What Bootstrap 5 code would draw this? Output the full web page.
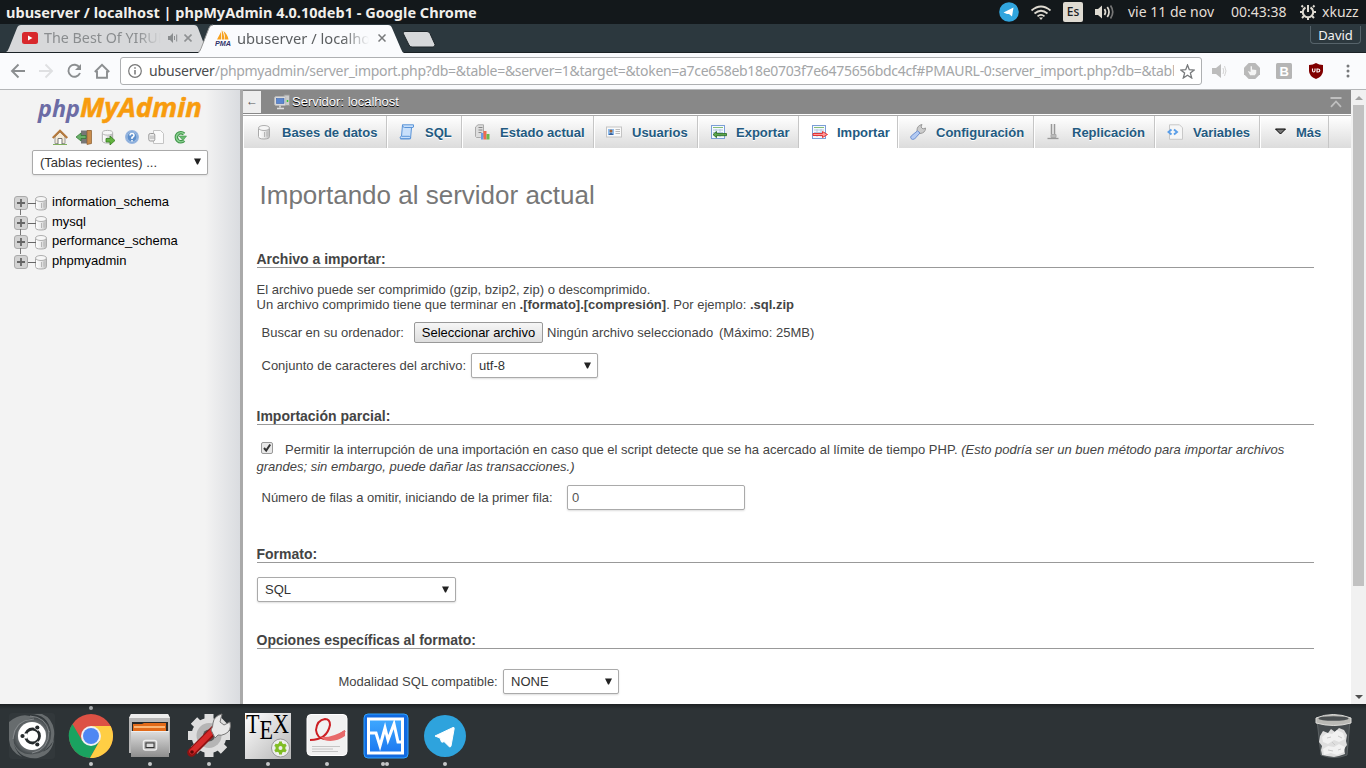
<!DOCTYPE html>
<html lang="es">
<head>
<meta charset="utf-8">
<meta name="viewport" content="width=device-width, initial-scale=1">
<title>ubuserver / localhost | phpMyAdmin 4.0.10deb1</title>
<link rel="stylesheet" href="https://cdn.jsdelivr.net/npm/bootstrap@5.3.0/dist/css/bootstrap.min.css">
<style>
body{width:1366px;height:768px;overflow:hidden;font-family:"Liberation Sans",Arial,sans-serif;font-size:13px;line-height:15px;color:#444;background:#fff}
svg{display:block;flex:none}
.ubu{font-family:"Noto Sans","Open Sans",sans-serif;white-space:nowrap}
.panel{height:24px;background:#13181b;color:#e3dfd7;font-size:14px;line-height:24px}
.panel .wintitle{font-weight:700;width:900px;padding-left:6px;font-size:14.5px;letter-spacing:.02px;color:#f1efeb}
.dt{margin-left:13px;width:103px}
.tm{width:69px}
.xk{margin-left:6px}
.es{width:20px;height:20px;background:#dfdbd2;color:#1c2022;border-radius:2px;font-size:12px;line-height:20px;text-align:center;font-weight:500}
.strip{height:29px;background:#2c383e;border-bottom:1px solid #1b2226}
.btab{height:29px;font-size:14.3px;line-height:28px}
.btab>svg.shape{position:absolute;left:0;top:0}
.btab .inner{position:relative;height:28px}
.fadeout{overflow:hidden;-webkit-mask-image:linear-gradient(90deg,#000 80%,transparent);mask-image:linear-gradient(90deg,#000 80%,transparent)}
.t1{margin-left:6px;width:117px;margin-right:7px}
.t2{margin-left:6px;width:132px;font-size:14.7px}
.user{width:51px;height:18px;border:1px solid #56636a;border-top:0;border-radius:0 0 4px 4px;color:#f3f3f3;font-size:13px;line-height:18px;text-align:center;margin:2px 5px 0 0}
.tools{height:37px;background:#fafbfd;border-bottom:1px solid #b4b6b8}
.omni{width:1082px;height:28px;border:1px solid #aeb0b2;border-radius:3px;background:#fff;color:#a4a6a8;font-size:14px;line-height:26px}
.omni b{font-weight:400;color:#4a4c4e;letter-spacing:-.15px}
.url{width:1025px;overflow:hidden;margin-left:7px;letter-spacing:-.31px}
.page{height:614px}
.side{width:240px;background:linear-gradient(90deg,#f3f3f3 0,#f3f3f3 205px,#dadce0 240px)}
.divider{width:3px;background:#aaa}
.fld{height:25px;border:1px solid #aaa;border-radius:2px;background:#fff;box-shadow:0 1px 2px #ddd;line-height:24px;padding-left:7px;color:#333;display:flex;justify-content:space-between;align-items:flex-start}
.fld svg{margin:8px 6px 0 0}
.tree li{height:20px;line-height:20px;color:#000}
.tree li:nth-child(2){height:19px}
.tree li:not(:last-child) .knob::after{content:"";position:absolute;left:6px;top:14px;width:1px;height:6px;background:#777}
.knob{position:relative;width:27px;margin-top:3px}
.srv{height:24px;background:#888;color:#fff;text-shadow:0 1px 0 #000;line-height:23px}
.srv .tog{width:18px;height:22px;margin-top:1px;background:#eee;color:#555;text-shadow:none;text-align:center;line-height:21px;font-size:12px}
.menu{height:33px;border-top:1px solid #aaa;background:linear-gradient(#fff,#dcdcdc);box-shadow:0 -1px 0 #fff}
.menu a{height:32px;padding-left:11px;border-left:1px solid #fff;border-right:1px solid #c6c6c6;font-weight:700;color:#235a81;text-decoration:none;text-shadow:0 1px 0 #fff;white-space:nowrap;display:flex;align-items:center;gap:10px;flex:none}
.menu a.on{background:#fff}
.menu a:nth-child(1){width:144px;padding-left:12px}.menu a:nth-child(2){width:75px}.menu a:nth-child(3){width:132px}.menu a:nth-child(4){width:104px}.menu a:nth-child(5){width:101px}.menu a:nth-child(6){width:99px}.menu a:nth-child(7){width:136px}.menu a:nth-child(8){width:121px}.menu a:nth-child(9){width:105px}.menu a:nth-child(10){width:69px}
.cont{padding:0 37px 0 13.500px;white-space:nowrap}
.cont h2{font-size:26px;line-height:40px;height:40px;margin:27px 0 0 3px;color:#777;font-weight:400}
.cont h3{font-size:14px;font-weight:700;line-height:19px;height:18px;border-bottom:1px solid #999;margin:0;color:#444}
.filebtn{height:21px;width:129px;border:1px solid #999;border-radius:2px;background:linear-gradient(#f6f6f6,#dedede);color:#000;text-align:center;line-height:19px}
.scroll{width:15px;background:#f1f1f1}
.scroll i{display:block;width:11px;height:481px;background:#c1c1c1}
.dock{height:64px;background:linear-gradient(#1d2123,#2d3336 5px)}
.dock .app{width:59px;height:64px;padding-top:8px;position:relative}
.dock .app svg{margin:0 auto}
.dot1::after,.dot2::after{content:"";position:absolute;bottom:2px;left:27.500px;width:4px;height:4px;border-radius:2px;background:#c4c7c8}
.dot2::after{left:25px;box-shadow:4px 0 0 #c4c7c8}
.top1::before{content:"";position:absolute;top:2px;left:27.500px;width:4px;height:4px;border-radius:2px;background:#a4a8aa}
</style>
<script src="https://cdn.jsdelivr.net/npm/bootstrap@5.3.0/dist/js/bootstrap.bundle.min.js"></script>
</head>
<body class="d-flex flex-column">
<svg width="0" height="0" class="position-absolute">
<defs>
<linearGradient id="cyl"><stop offset="0" stop-color="#fff"/><stop offset=".5" stop-color="#ececec"/><stop offset="1" stop-color="#bbb"/></linearGradient>
<linearGradient id="metal" x2="0" y2="1"><stop offset="0" stop-color="#dedede"/><stop offset="1" stop-color="#8e8e8e"/></linearGradient>
<linearGradient id="blu" x2="0" y2="1"><stop offset="0" stop-color="#3fa9ff"/><stop offset="1" stop-color="#1c78f0"/></linearGradient>
<linearGradient id="paper" x2="1" y2="1"><stop offset="0" stop-color="#fff"/><stop offset="1" stop-color="#b5b5b5"/></linearGradient>
<radialGradient id="dash"><stop offset=".5" stop-color="#85898b"/><stop offset="1" stop-color="#3a4043"/></radialGradient>
<symbol id="db" viewBox="0 0 16 16"><path d="M2.500 4.500v8q0 2.500 5.500 2.500t5.500-2.500v-8" fill="url(#cyl)" stroke="#aaa"/><ellipse cx="8" cy="4" rx="5.500" ry="2.500" fill="#f6f6f6" stroke="#b0b0b0"/><path d="M8.500 8v5M11 7.500v5" stroke="#b5b5b5"/></symbol>
<symbol id="plus" viewBox="0 0 27 14"><path d="M14 7.500h8" stroke="#666"/><rect x=".5" y=".5" width="13" height="13" rx="2.500" fill="#d2d2d2" stroke="#aaa"/><path d="M7 3v8M3 7h8" stroke="#666" stroke-width="1.800"/></symbol>
<symbol id="sheet" viewBox="0 0 16 16"><rect x="1.500" y="1.500" width="13" height="13" fill="#f5f9ff" stroke="#7b9fd6"/><path d="M3 3.500h10" stroke="#86bd76"/><path d="M3 6h10M3 8.500h10M3 11h10M6 5v8M10 5v8" stroke="#b4c8e0"/></symbol>
<symbol id="down" viewBox="0 0 7 7"><path d="M0 .5h7L4 6.500H3z" fill="#222"/></symbol>
</defs>
</svg>

<header class="panel ubu d-flex">
  <div class="wintitle">ubuserver / localhost | phpMyAdmin 4.0.10deb1 - Google Chrome</div>
  <div class="d-flex align-items-center ms-auto" style="width:367px">
    <svg width="20" height="20" viewBox="0 0 20 20"><circle cx="10" cy="10" r="9.800" fill="#31a5de"/><path d="M4.500 10.500 14.500 5.500 13 14.500 10 12 8 12z" fill="#fff"/></svg>
    <svg class="ms-2" width="28" height="20" viewBox="-2 0 28 20" fill="none" stroke="#dfdbd2" stroke-width="1.700"><path d="M2.500 8.500q9.500-8 19 0M5.500 11.500q6.500-5.500 13 0M8.500 14.300q3.500-3 7 0"/><path d="M10 15.500h4L12 18z" fill="#dfdbd2" stroke="none"/></svg>
    <div class="es" style="margin-left:8px">Es</div>
    <svg style="margin-left:12px" width="20" height="18" viewBox="0 0 20 18" fill="none" stroke="#dfdbd2" stroke-width="1.700"><path d="M0 6h3l4-3.500v13L3 12H0z" fill="#dfdbd2" stroke="none"/><path d="M9.500 6q2 3 0 6M12.300 4q3.500 5 0 10"/><path d="M15.500 2.500q4.500 6.500 0 13" stroke="#777"/></svg>
    <span class="dt">vie 11 de nov</span><span class="tm">00:43:38</span>
    <svg width="16" height="18" viewBox="0 0 16 18" fill="none" stroke="#dfdbd2" stroke-width="2"><path d="M5.500 4.500a5.200 5.200 0 1 0 5 0M8 2v7"/><path d="M3 4 1.500 2.500M13 4l1.500-1.500M2.500 9H0M13.500 9H16M4 13l-2 2M12 13l2 2M8 14v3"/></svg>
    <span class="xk">xkuzz</span>
  </div>
</header>

<nav class="strip d-flex">
  <div class="btab ubu position-relative" style="width:198px;color:#8a8d8f">
    <svg class="shape" width="210" height="28"><path d="M6 28q2-1 3-4L17 4q1-3 4-3H194q3 0 4 3l9 24z" fill="#d7d8da"/></svg>
    <div class="inner d-flex align-items-center">
      <svg style="margin-left:22px" width="16" height="12"><rect width="16" height="12" rx="2.500" fill="#d8282c"/><path d="M6 3.500v5l4.500-2.500z" fill="#fff"/></svg>
      <div class="fadeout t1">The Best Of YIRUMA</div>
      <svg width="10" height="10" viewBox="0 0 10 10" fill="none" stroke="#8a8d8f"><path d="M0 3h2l3-3v10L2 7H0z" fill="#8a8d8f" stroke="none"/><path d="M6.500 3v4M8.700 1.500v7"/></svg>
      <svg style="margin-left:6px" width="8" height="8" stroke="#8f9193" stroke-width="1.600"><path d="M.5.500l7 7M7.500.500l-7 7"/></svg>
    </div>
  </div>
  <div class="btab ubu position-relative" style="width:205px;color:#5b5e60">
    <svg class="shape" width="210" height="29"><path d="M0 29q2-1 3-4L11 4q1-3 4-3H190q3 0 4 3l9 21q1 3 3 4z" fill="#fafbfd"/><path d="M0 28.500q2-1 3-4L11 4q1-3 4-3" fill="none" stroke="#999"/></svg>
    <div class="inner d-flex align-items-center">
      <svg style="margin-left:17px" width="16" height="16" viewBox="0 0 16 16"><path d="M2 9.500 6 2v7.500zM6.800 9.500V0q2 3 2.700 9.500zM10 9.500Q10 4 8.500 1q4 3 5 8.500z" fill="#f7a11e"/><text x="0" y="15.500" font-family="Liberation Sans" font-size="6.500" font-weight="700" font-style="italic" fill="#33336b" textLength="16" lengthAdjust="spacingAndGlyphs">PMA</text></svg>
      <div class="fadeout t2">ubuserver / localhost</div>
      <svg style="margin-left:9px" width="8" height="8" stroke="#77797b" stroke-width="1.500"><path d="M.5.500l7 7M7.500.500l-7 7"/></svg>
    </div>
  </div>
  <svg width="34" height="20" style="margin-top:5px"><path d="M2 2.500h22q2 0 3 2l5 11q0 2.500-2 2.500H9q-2 0-3-2L0 4q0-1.500 2-1.500z" fill="#d6d8da" stroke="#1d2529"/></svg>
  <div class="user ubu ms-auto">David</div>
</nav>

<div class="tools d-flex align-items-center">
  <svg style="margin-left:10px" width="105" height="20" viewBox="0 0 105 20" fill="none" stroke="#8b8e90" stroke-width="1.900"><path d="M15 10H2.500M8.500 3.500 2 10l6.500 6.500"/><path d="M29 10h12.500M35.500 3.500 42 10l-6.500 6.500" stroke="#dfe0e2"/><path d="M69.500 6.500A6 6 0 1 0 70 12"/><path d="M71 3v6h-6z" fill="#8b8e90" stroke="none"/><path d="M84.800 11 92 3.800l7.200 7.200M87 10v6.800h10V10"/></svg>
  <div class="omni d-flex align-items-center" style="margin-left:5px">
    <svg style="margin-left:7px" width="14" height="14" viewBox="0 0 14 14" fill="none" stroke="#777"><circle cx="7" cy="7" r="6.300" stroke-width="1.200"/><path d="M7 6v4.500M7 3.300v1.500" stroke-width="1.500"/></svg>
    <div class="url ubu"><b>ubuserver</b>/phpmyadmin/server_import.php?db=&amp;table=&amp;server=1&amp;target=&amp;token=a7ce658eb18e0703f7e6475656bdc4cf#PMAURL-0:server_import.php?db=&amp;table=</div>
    <svg style="margin-left:6px" width="15" height="15" viewBox="0 0 15 15" fill="none" stroke="#77797b" stroke-width="1.300"><path d="m7.500 1 1.800 4.700 4.900.3-3.800 3.100 1.300 4.900-4.200-2.700L3.300 14l1.300-4.900L.8 6l4.900-.3z"/></svg>
  </div>
  <svg style="margin-left:10px" width="16" height="16" viewBox="0 0 16 16" fill="none" stroke="#d4d4d4"><path d="M0 5h4l5-4v14L4 11H0z" fill="#bcbcbc" stroke="none"/><path d="M11 5q1.500 3 0 6M12.500 3q3 5 0 10"/></svg>
  <svg style="margin-left:16px" width="16" height="16" viewBox="0 0 17 17"><path d="M5 0h7l5 5v7l-5 5H5l-5-5V5z" fill="#b9b9b9"/><path d="M4 8.500 6.500 13h5l1.500-2V7.500L8.500 7V3.500H7v6z" fill="#f4f4f4"/></svg>
  <svg style="margin-left:16px" width="16" height="16"><rect width="16" height="16" rx="1.500" fill="#b5b5b5"/><text x="3.500" y="12.500" font-family="Liberation Sans" font-size="13" font-weight="700" fill="#fff">B</text></svg>
  <svg style="margin-left:17px" width="14" height="16"><path d="M7 0q3 2 7 2v6q0 5-7 8-7-3-7-8V2q4 0 7-2z" fill="#800000"/><path d="M3.500 5.500v2q0 1.500 1.200 1.500T6 7.500v-2M8 6v3h1q1.800 0 1.800-1.500T9 6z" fill="none" stroke="#fff" stroke-width="1.100"/></svg>
  <svg style="margin-left:23px" width="4" height="14" fill="#77797b"><circle cx="2" cy="2" r="1.500"/><circle cx="2" cy="7" r="1.500"/><circle cx="2" cy="12" r="1.500"/></svg>
</div>

<main class="page d-flex">
  <aside class="side">
    <svg style="margin:4px 0 0 36px" width="170" height="32"><text x="2" y="23" font-family="Open Sans, Noto Sans" font-weight="700" font-style="italic" font-size="23" fill="#6c6ca5" textLength="42" lengthAdjust="spacingAndGlyphs">php</text><text x="44" y="23" font-family="Open Sans, Noto Sans" font-weight="700" font-style="italic" font-size="27" fill="#f89c0e" stroke="#f89c0e" stroke-width=".5" textLength="122" lengthAdjust="spacingAndGlyphs">MyAdmin</text></svg>
    <div class="d-flex" style="gap:8px;margin:3px 0 0 52px">
      <svg width="16" height="16"><path d="M3 8v6.500h10V8L8 3z" fill="#f3ead8" stroke="#999"/><path d="M0.700 9 8 1.800 15.300 9" fill="none" stroke="#b5793c" stroke-width="2.200"/><path d="M6 15V9.500h4V15" fill="#fff" stroke="#777"/><path d="M1 15.500h14" stroke="#7fae5c"/></svg>
      <svg width="16" height="16"><path d="M5 1.500h10v13H5z" fill="#777"/><path d="M11 1.500h4.500v13l-4.500 1z" fill="#c98c4b" stroke="#8a5d2e" stroke-width=".7"/><path d="M0 8l5-4v2.500h5v3H5V12z" fill="#6ab06a" stroke="#2e752e" stroke-width=".7"/></svg>
      <svg width="16" height="16"><use href="#db" width="15" height="15"/><path d="M6 9.500h4V7l5 4.500-5 4.500v-3H6z" fill="#62b33f" stroke="#377e21" stroke-width=".8"/></svg>
      <svg width="16" height="16"><circle cx="8" cy="8" r="6.300" fill="#5d8ecb" stroke="#9ab7e0" stroke-width="1.300"/><circle cx="8" cy="8" r="5" fill="none" stroke="#cfe0f5" stroke-width=".6"/><path d="M6 6.500q0-2 2-2t2 2q0 1-2 2V10M8 11v1.500" fill="none" stroke="#fff" stroke-width="1.500"/></svg>
      <svg width="16" height="16"><path d="M5.500 1.500h7l3 3v10h-10z" fill="#fafafa" stroke="#c4c4c4"/><rect x=".8" y="4.500" width="6" height="7.500" rx="1.500" fill="#eee" stroke="#999"/><path d="M3 6.500v3.500M5 6.500v3.500" stroke="#aaa"/></svg>
      <svg width="16" height="16"><path d="M12 5A4.500 4.500 0 1 0 12 11.500" fill="none" stroke="#3f9549" stroke-width="3.600"/><path d="M12 5A4.500 4.500 0 1 0 12 11.500" fill="none" stroke="#8bd091" stroke-width="1.600"/><path d="M7 7h7.500L11 11.500z" fill="#6abb72" stroke="#3f9549" stroke-width=".6"/></svg>
    </div>
    <div class="fld" style="width:176px;margin:5px 0 0 32px">(Tablas recientes) ...<svg width="7" height="7" style="margin-top:7px"><use href="#down"/></svg></div>
    <ul class="tree list-unstyled" style="margin:17px 0 0 14px">
      <li class="d-flex"><div class="knob"><svg width="27" height="14" style="margin-top:1px"><use href="#plus"/></svg></div><svg width="16" height="16" style="margin:3px 0 0 -8px"><use href="#db"/></svg><span style="margin-left:3px">information_schema</span></li>
      <li class="d-flex"><div class="knob"><svg width="27" height="14" style="margin-top:1px"><use href="#plus"/></svg></div><svg width="16" height="16" style="margin:3px 0 0 -8px"><use href="#db"/></svg><span style="margin-left:3px">mysql</span></li>
      <li class="d-flex"><div class="knob"><svg width="27" height="14" style="margin-top:1px"><use href="#plus"/></svg></div><svg width="16" height="16" style="margin:3px 0 0 -8px"><use href="#db"/></svg><span style="margin-left:3px">performance_schema</span></li>
      <li class="d-flex"><div class="knob"><svg width="27" height="14" style="margin-top:1px"><use href="#plus"/></svg></div><svg width="16" height="16" style="margin:3px 0 0 -8px"><use href="#db"/></svg><span style="margin-left:3px">phpmyadmin</span></li>
    </ul>
  </aside>
  <div class="divider"></div>
  <section style="width:1108px">
    <div class="srv d-flex">
      <div class="tog">←</div>
      <svg style="margin:4px 1px 0 13px" width="17" height="16"><path d="M10 1h5.500v10.500H10z" fill="#ccc" stroke="#999"/><path d="M13.500 6v2" stroke="#3c3" stroke-width="1.500"/><rect x=".7" y="2.700" width="11" height="8.600" rx="1" fill="#e2e2e2" stroke="#bbb"/><rect x="2.500" y="4.500" width="7.500" height="5" fill="#5b87cf" stroke="#3b62a8" stroke-width=".6"/><path d="M6 11.500v2M3 14.500h7" stroke="#ddd" stroke-width="1.500"/></svg>
      <span>Servidor: localhost</span>
      <svg class="ms-auto" style="margin:7px 9px 0 0" width="12" height="11" fill="none" stroke="#bfbfbf" stroke-width="1.800"><path d="M.5 1h11M1 9.800 6 4.500l5 5.300"/></svg>
    </div>
    <nav class="menu d-flex" style="margin-top:1px">
      <a href="#"><svg width="16" height="16"><use href="#db"/></svg>Bases de datos</a>
      <a href="#"><svg width="16" height="16"><path d="M3.500.8h11q1 3-2 3l-1 11H1.500q-1.500-2 1-2.500z" fill="#c8e0fb" stroke="#5b94d8"/><path d="M3.500.8Q3 3 5.500 3.500H13M1.500 14.800h9q2-1 0-2.500H3" fill="none" stroke="#5b94d8"/></svg>SQL</a>
      <a href="#"><svg width="16" height="16"><path d="M1.500 3 4 .8h5.500V13l-3 .5h-4l-1-1z" fill="#ddd" stroke="#aaa"/><path d="M4.500 3.500h4M4.500 6h4M4.500 8.500h3" stroke="#888"/><path d="M7 9h2.500v6.500H7z" fill="#6d9be6"/><path d="M9.500 7h3v8.500h-3z" fill="#ee6b50"/><path d="M12.500 10h3v5.500h-3z" fill="#6bb84e"/></svg>Estado actual</a>
      <a href="#"><svg width="16" height="16"><rect x=".5" y="3" width="15" height="10" fill="#fafafa" stroke="#c4c4c4"/><rect x="2" y="5" width="6" height="6" fill="#8dbcee"/><circle cx="5" cy="7" r="1.500" fill="#a5673a"/><path d="M2.500 11q2.500-4 5 0z" fill="#335f9c"/><path d="M9.500 5.500h4.500M9.500 7.500h4.500M9.500 9.500h4.500" stroke="#bbb"/></svg>Usuarios</a>
      <a href="#"><svg width="17" height="16" style="margin-right:-1px"><use href="#sheet" width="16" height="16"/><path d="M3 10.500 6.500 7.500v2h10v2.200h-10v2z" fill="#5ea54e" stroke="#246b1d" stroke-width=".8"/></svg>Exportar</a>
      <a href="#" class="on"><svg width="17" height="16" style="margin-right:-1px"><use href="#sheet" width="16" height="16"/><path d="M2 9.500h9.500v-2l5 3-5 3v-2H2z" fill="#ff9a9a" stroke="#e02626" stroke-width=".9"/></svg>Importar</a>
      <a href="#"><svg width="16" height="16"><path d="M7 6.500Q7 1.500 12 .5L11 3l2 2L15.500 4q0 5-5.500 5.500z" fill="#ccc" stroke="#999"/><path d="M7.500 6.800 10 9 4.500 15Q2 16 1 14.500 .1 13 1.200 12z" fill="#b3caf2" stroke="#6e90d0"/></svg>Configuración</a>
      <a href="#"><svg width="16" height="16"><path d="M5.500 0v10M8.500 0v10" stroke="#999" stroke-width="1.500"/><path d="M7 0v12" stroke="#ddd"/><path d="M5 10.500h5v3H5z" fill="#bbb" stroke="#aaa"/><path d="M1.500 14.500h11" stroke="#999" stroke-width="1.300"/></svg>Replicación</a>
      <a href="#"><svg width="16" height="16"><path d="M2.500.8h10l3 3v11.500h-13z" fill="#f6f6f6" stroke="#c8c8c8"/><path d="M4.500 5.500 1.500 8l3 2.500M7 5.500 10 8l-3 2.500" fill="none" stroke="#5a9ee8" stroke-width="1.900"/></svg>Variables</a>
      <a href="#"><svg width="13" height="8" style="margin:0 -1px 0 2px"><path d="M1.500 1h10l-5 5z" fill="#777" stroke="#000"/></svg>Más</a>
    </nav>
    <div class="cont">
      <h2>Importando al servidor actual</h2>
      <h3 style="margin-top:35px">Archivo a importar:</h3>
      <p class="m-0" style="padding-top:14px">El archivo puede ser comprimido (gzip, bzip2, zip) o descomprimido.<br>Un archivo comprimido tiene que terminar en <strong>.[formato].[compresión]</strong>. Por ejemplo: <strong>.sql.zip</strong></p>
      <div class="d-flex align-items-center" style="margin-top:10px;padding-left:5px"><span style="width:152.500px">Buscar en su ordenador:</span><div class="filebtn">Seleccionar archivo</div><span style="margin-left:4px;width:172px">Ningún archivo seleccionado</span><span>(Máximo: 25MB)</span></div>
      <div class="d-flex align-items-center" style="margin-top:10px;padding-left:5px"><span style="width:209.500px">Conjunto de caracteres del archivo:</span><div class="fld" style="width:127px">utf-8<svg width="7" height="7"><use href="#down"/></svg></div></div>
      <h3 style="margin-top:29px">Importación parcial:</h3>
      <p class="m-0" style="padding-top:16px;line-height:17px"><svg class="d-inline-block" style="margin:0 12px 0 4.500px;vertical-align:-1px" width="12" height="13"><rect x=".5" y=".5" width="11" height="11" rx="1.500" fill="#e8e8e8" stroke="#999"/><path d="M3 6l2.200 2.500 4-6" fill="none" stroke="#333" stroke-width="2"/></svg>Permitir la interrupción de una importación en caso que el script detecte que se ha acercado al límite de tiempo PHP. <em>(Esto podría ser un buen método para importar archivos<br>grandes; sin embargo, puede dañar las transacciones.)</em></p>
      <div class="d-flex align-items-center" style="margin-top:10px;padding-left:5px"><span style="width:305.500px">Número de filas a omitir, iniciando de la primer fila:</span><div class="fld ps-1" style="width:178px;color:#555">0</div></div>
      <h3 style="margin-top:35px">Formato:</h3>
      <div class="fld" style="width:199px;margin:14px 0 0 .5px">SQL<svg width="7" height="7"><use href="#down"/></svg></div>
      <h3 style="margin-top:29px">Opciones específicas al formato:</h3>
      <div class="d-flex align-items-center" style="margin-top:20px;padding-left:82px"><span style="width:164.500px">Modalidad SQL compatible:</span><div class="fld" style="width:116px">NONE<svg width="7" height="7"><use href="#down"/></svg></div></div>
    </div>
  </section>
  <div class="scroll d-flex flex-column align-items-center">
    <svg width="8" height="15"><path d="M0 10l4-4 4 4z" fill="#a3a3a3"/></svg><i></i><svg class="mt-auto" width="8" height="15"><path d="M0 6l4 4 4-4z" fill="#505050"/></svg>
  </div>
</main>

<footer class="dock d-flex">
  <div class="app" style="margin-left:2px"><svg width="48" height="48" viewBox="0 0 48 48" fill="none"><rect x="1" y="1" width="46" height="46" rx="3" fill="#32383b"/><circle cx="24" cy="24" r="20" fill="url(#dash)"/><path d="M1 10Q14-1 27 6 12 6 6 24q-2 12 8 21Q2 40 1 28zM22 2q18 0 21 18 1 10-8 20Q48 34 46 18 44 6 34 2zM5 29q6 15 21 13 12-1 20-14-2 14-16 18-20 2-25-17z" fill="#676c6e"/><path d="M5 27Q6 8 26 7M41 19q0 19-17 22M22 4q16 1 19 16" stroke="#8f9395" stroke-width=".8"/><circle cx="24" cy="24" r="14" fill="#fff"/><circle cx="24.500" cy="24" r="7" stroke="#252a2c" stroke-width="2.800"/><path d="M13 24h6M28 17.500l3-4M28 30.500l3 4" stroke="#fff" stroke-width="5"/><g fill="#252a2c"><circle cx="14.500" cy="24" r="2.100"/><circle cx="29.300" cy="15.500" r="2.100"/><circle cx="29.300" cy="32.500" r="2.100"/></g></svg></div>
  <div class="app dot1 top1"><svg width="48" height="48" viewBox="0 0 48 48"><circle cx="24" cy="24" r="22" fill="#dd5144"/><path d="M5.500 12 15.340 29 24 24l8.660 5L23 46A22 22 0 0 1 5.500 12z" fill="#1aa260"/><path d="M24 14h19.600A22 22 0 0 1 23 46L32.660 29 24 24z" fill="#ffce44"/><circle cx="24" cy="24" r="10" fill="#f1f1f1"/><circle cx="24" cy="24" r="8" fill="#4e87f3"/></svg></div>
  <div class="app dot1"><svg width="48" height="48" viewBox="0 0 48 48"><path d="M5 2h37l2 4v35H3V6z" fill="#b7b7b7"/><path d="M5 2h37l2 4H3z" fill="#ededed"/><path d="M6 10h36v10H6z" fill="#282828"/><path d="M7 12h9l2-1h22v8H7z" fill="#e26a19"/><path d="M8 14h31v2H8z" fill="#fbb574"/><path d="M5 19h38v26H5z" fill="url(#metal)"/><path d="M5 19.500h38" stroke="#eee"/><rect x="17.500" y="28.500" width="13" height="9.500" rx="2" fill="#aaa" stroke="#ededed" stroke-width="1.500"/><rect x="20" y="31" width="8" height="4.500" fill="#ddd" stroke="#333"/></svg></div>
  <div class="app dot1"><svg width="48" height="48" viewBox="0 0 48 48"><g stroke="#dedede" stroke-width="9"><path d="M24 2v43M3 23.500h42M9 8.500l30 30M39 8.500l-30 30"/></g><circle cx="24" cy="23.500" r="17.500" fill="#dedede"/><circle cx="24" cy="23.500" r="12.500" fill="#b5b5b5"/><circle cx="24" cy="23.500" r="6" fill="#555"/><path d="m6.500 40.500 23-23" stroke="#8f1212" stroke-width="8.500" stroke-linecap="round"/><path d="m7 39.500 22-22" stroke="#d62a2a" stroke-width="5.500" stroke-linecap="round"/><path d="M26 18q2-3 2-7 1-7 9-9l-2 8 4 3 6-3q2 9-5 12-4 2-7 1l-3 3z" fill="#e8e8e8" stroke="#777"/><circle cx="7" cy="40" r="1.800" fill="#5a0909"/></svg></div>
  <div class="app dot1"><svg width="48" height="48" viewBox="0 0 48 48"><rect x="1" y="1" width="46" height="46" fill="url(#paper)"/><text x="2" y="21" font-family="Liberation Serif" font-size="27" fill="#000" textLength="43" lengthAdjust="spacingAndGlyphs">T<tspan dy="5.500">E</tspan><tspan dy="-5.500">X</tspan></text><circle cx="36.500" cy="36" r="9" fill="#eee" stroke="#999"/><circle cx="36.500" cy="36" r="3.500" fill="none" stroke="#80bd25" stroke-width="3"/><path d="M36.500 29.500v3M36.500 39.500v3M31 32.800l2.500 1.500M39.500 37.700l2.500 1.500M31 39.200l2.500-1.500M39.500 34.300l2.500-1.500" stroke="#80bd25" stroke-width="3"/></svg></div>
  <div class="app dot1"><svg width="48" height="48" viewBox="0 0 48 48"><rect x="4" y="2.500" width="40" height="41" rx="4" fill="#f1f1f1" stroke="#fff"/><path d="M7 28Q24 28 27 13q0-6-5-6-8 1-9 11 1 8 8 9 9 1 21-8" fill="none" stroke="#cc1f24" stroke-width="2"/><path d="M18 25q11 1 24-7v6q-10 7-21 4z" fill="#e86a6a"/><path d="M9 34.500h28M9 37h21M9 39.500h26" stroke="#c4c4c4"/></svg></div>
  <div class="app dot2"><svg width="48" height="48" viewBox="0 0 48 48"><rect x="2" y="2" width="44" height="44" rx="4" fill="#126ae0" stroke="#2da2ff"/><rect x="6.500" y="7" width="34" height="34" fill="url(#blu)" stroke="#fff" stroke-width="3"/><path d="M7 21h7l4 13 5-18 3 12 6-16 4 18h5" fill="none" stroke="#fff" stroke-width="3"/></svg></div>
  <div class="app dot1"><svg width="48" height="48" viewBox="0 0 48 48"><circle cx="24" cy="24" r="21" fill="#2ea3dd"/><path d="M14 24 32 15.500q1.300-.5 1.200 1L30 34q-.5 1.500-1.700.7L23 29.500q-1 1-2.500.5L19 26z" fill="#fff" stroke="#fff"/></svg></div>
  <div class="app ms-auto" style="margin-right:4px"><svg width="48" height="48" viewBox="0 0 48 48"><path d="M8 8h33l-3 35q-13 5-26 0z" fill="#454b4e" stroke="#5c6264"/><path d="m11 24 3-5 5 2 3-4 4 3 4-4 5 2 3 5-1 6 1 4-3 4 1 5-6 2-5 1-7-1-5-1-1-5 1-4-3-4z" fill="#dedede"/><path d="m13 25 5-4 5 1 5-4 6 3 2 6-6 3-5-2-6 4-5-2zM14 37l5-3 6 1 5-3 6 3-1 5-7 3-6-2-7 2z" fill="#f1f1f1"/><path d="M23 30l3 3M18 26l4-1M29 24l4 2M19 38l5 1M29 38l3-1" stroke="#c9c9c9"/><path d="M7 6q17-7 35 0v5q-17 5-35 0z" fill="#b9b9b5" stroke="#dcdcd9"/><ellipse cx="24.500" cy="6.500" rx="15" ry="2.300" fill="#4a4f51"/></svg></div>
</footer>
</body>
</html>
